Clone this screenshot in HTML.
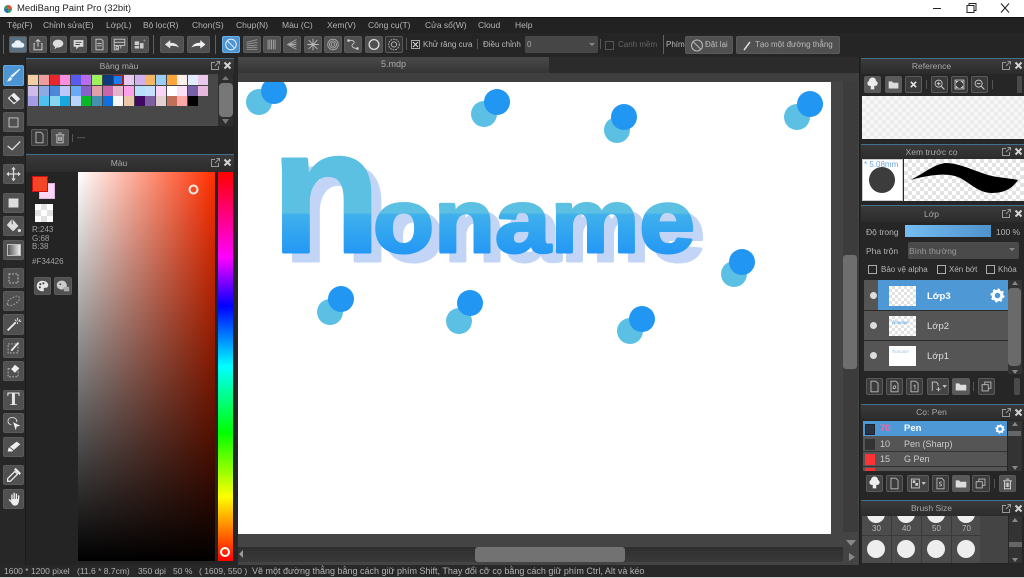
<!DOCTYPE html>
<html><head><meta charset="utf-8"><title>MediBang Paint Pro</title>
<style>
html,body{margin:0;padding:0;width:1024px;height:578px;overflow:hidden;background:#222}
body{position:relative;font-family:"Liberation Sans","Noto Sans CJK SC",sans-serif;font-size:8.500px;color:#b4b4b4}
div,span,svg{position:absolute;box-sizing:border-box}
.t{white-space:nowrap;line-height:12px}
.k{font-size:8px}
.b{background:#505050;border-radius:2px;border:1px solid #5a5a5a}
.b svg{left:0;top:0;width:100%;height:100%}
.h{background:linear-gradient(#3a3a3a,#2c2c2c);border-top:1px solid #41708f;color:#a8a8a8;text-align:center;line-height:15px;font-size:8.500px;padding-right:22px}
.c{background-color:#fff;background-image:conic-gradient(#e2e2e2 25%,#fff 0 50%,#e2e2e2 0 75%,#fff 0);background-size:8px 8px}
.s{width:10px;height:10px}
.wi{width:9px;height:9px;fill:none;stroke:#999}
.x{width:9px;height:9px;fill:none;stroke:#d4d4d4;stroke-width:2}
.cb{width:9px;height:9px;border:1px solid #aaa}
</style></head><body>

<!-- title bar -->
<div style="left:0;top:0;width:1024px;height:17px;background:#fff"></div>
<svg style="left:3px;top:4px;width:10px;height:10px" viewBox="0 0 10 10"><circle cx="5" cy="5" r="4" fill="#3a9a6a"/><path d="M5 1A4 4 0 0 1 9 5L5 5Z" fill="#e8503a"/><path d="M1 5A4 4 0 0 0 5 9L5 5Z" fill="#2b6cc4"/></svg>
<div class="t" style="left:17px;top:3px;color:#222;font-size:9.500px">MediBang Paint Pro (32bit)</div>
<svg style="left:930px;top:0;width:94px;height:17px" viewBox="0 0 94 17" fill="none" stroke="#222"><path d="M3 8.500H11"/><path d="M37 5.500H44V12.500H37ZM39 5.500V3.500H46V10.500H44"/><path d="M71 3.500L79 12.500M79 3.500L71 12.500"/></svg>

<!-- menu -->
<div style="left:0;top:17px;width:1024px;height:16px;background:#222;border-top:1px solid #111"></div>
<div class="t" style="left:7px;top:19px">Tệp(F)</div>
<div class="t" style="left:43px;top:19px">Chỉnh sửa(E)</div>
<div class="t" style="left:106px;top:19px">Lớp(L)</div>
<div class="t" style="left:143px;top:19px">Bộ lọc(R)</div>
<div class="t" style="left:192px;top:19px">Chọn(S)</div>
<div class="t" style="left:236px;top:19px">Chụp(N)</div>
<div class="t" style="left:282px;top:19px">Màu (C)</div>
<div class="t" style="left:327px;top:19px">Xem(V)</div>
<div class="t" style="left:368px;top:19px">Công cụ(T)</div>
<div class="t" style="left:425px;top:19px">Cửa sổ(W)</div>
<div class="t" style="left:478px;top:19px">Cloud</div>
<div class="t" style="left:515px;top:19px">Help</div>

<!-- toolbar -->
<div style="left:0;top:33px;width:1024px;height:24px;background:#252525"></div>
<div style="left:3px;top:35px;width:1px;height:19px;background:#3f6a8a"></div>
<div style="left:153px;top:35px;width:1px;height:19px;background:#3f6a8a"></div>
<div style="left:215px;top:35px;width:1px;height:19px;background:#3f6a8a"></div>
<div style="left:663px;top:35px;width:1px;height:19px;background:#3f6a8a"></div>

<div class="b" style="left:9px;top:36px;width:18px;height:17px;background:#5a6f80"><svg viewBox="0 0 18 17"><path d="M4 12a2.500 2.500 0 0 1 .5-5A4.500 4.500 0 0 1 13 6.500a2.800 2.800 0 0 1 1 5.500Z" fill="#e8f2fa"/></svg></div>
<div class="b" style="left:29px;top:36px;width:18px;height:17px"><svg viewBox="0 0 18 17" fill="none" stroke="#ddd"><path d="M5.500 7.500H4.500V14.500H13.500V7.500H12.500M9 11V3M6.500 5.500L9 3L11.500 5.500"/></svg></div>
<div class="b" style="left:50px;top:36px;width:17px;height:17px"><svg viewBox="0 0 17 17"><ellipse cx="8" cy="7.500" rx="6" ry="4.500" fill="#ddd"/><path d="M5 10L4 14L8 11Z" fill="#ddd"/></svg></div>
<div class="b" style="left:70px;top:36px;width:17px;height:17px"><svg viewBox="0 0 17 17"><path d="M3 3.500H14V11H9L6 14V11H3Z" fill="#ddd"/><path d="M5 6H12M5 8.500H10" stroke="#444"/></svg></div>
<div class="b" style="left:91px;top:36px;width:17px;height:17px"><svg viewBox="0 0 17 17" fill="none" stroke="#ccc"><path d="M4.500 2.500H10.500L12.500 4.500V14.500H4.500ZM6 7.500H11M6 10H11"/></svg></div>
<div class="b" style="left:111px;top:36px;width:17px;height:17px"><svg viewBox="0 0 17 17" fill="none" stroke="#ccc"><path d="M2.500 2.500H14.500V9.500H2.500ZM2.500 6H14.500M2.500 9.500V14.500H8M10 9.500V13"/><circle cx="6" cy="12" r="1.500"/></svg></div>
<div class="b" style="left:131px;top:36px;width:18px;height:17px"><svg viewBox="0 0 18 17"><path d="M3 5H8V9H3ZM9 7H13V13H9ZM3 10H8V13H3Z" fill="#ccc"/><path d="M13 3H15V5H13Z" fill="#888"/></svg></div>

<div class="b" style="left:160px;top:36px;width:24px;height:17px"><svg viewBox="0 0 24 17"><path d="M4 8.500L10 3.500V6.500C15 6.500 18 8 20 12C17 10 14 10 10 10V13Z" fill="#e6e6e6"/></svg></div>
<div class="b" style="left:187px;top:36px;width:23px;height:17px"><svg viewBox="0 0 24 17"><path d="M20 8.500L14 3.500V6.500C9 6.500 6 8 4 12C7 10 10 10 14 10V13Z" fill="#f2f2f2"/></svg></div>

<div class="b" style="left:222px;top:36px;width:18px;height:17px;background:#4d95d2;border-color:#6cb0e6"><svg viewBox="0 0 18 17" fill="none" stroke="#dceaf6" stroke-width="1.200"><circle cx="9" cy="8.500" r="6"/><path d="M5 4.500L13 12.500"/></svg></div>
<div class="b" style="left:243px;top:36px;width:18px;height:17px"><svg viewBox="0 0 18 17" stroke="#999"><path d="M3 6L15 3M3 8L15 6M3 10L15 9M3 12L15 11.500M3 14L15 14"/></svg></div>
<div class="b" style="left:263px;top:36px;width:18px;height:17px"><svg viewBox="0 0 18 17" stroke="#aaa"><path d="M4.500 3V14M6.500 3V14M8.500 3V14M10.500 3V14M12.500 3V14"/></svg></div>
<div class="b" style="left:283px;top:36px;width:18px;height:17px"><svg viewBox="0 0 18 17" stroke="#aaa" fill="none"><path d="M14 3L4 8.500L14 14M14 6L4 8.500L14 11M4 8.500H14"/></svg></div>
<div class="b" style="left:304px;top:36px;width:18px;height:17px"><svg viewBox="0 0 18 17" stroke="#bbb"><path d="M9 2V15M2.500 8.500H15.500M4 3.500L14 13.500M14 3.500L4 13.500"/></svg></div>
<div class="b" style="left:324px;top:36px;width:18px;height:17px"><svg viewBox="0 0 18 17" stroke="#aaa" fill="none"><circle cx="9" cy="8.500" r="6"/><circle cx="9" cy="8.500" r="4"/><circle cx="9" cy="8.500" r="2"/></svg></div>
<div class="b" style="left:344px;top:36px;width:18px;height:17px"><svg viewBox="0 0 18 17" stroke="#ccc" fill="none"><path d="M4 4C10 3 12 6 9 8C6 10 9 13 14 13"/><circle cx="4" cy="4" r="1" fill="#ddd"/><circle cx="14" cy="13" r="1" fill="#ddd"/></svg></div>
<div class="b" style="left:365px;top:36px;width:18px;height:17px"><svg viewBox="0 0 18 17" stroke="#ddd" fill="none" stroke-width="1.500"><circle cx="9" cy="8.500" r="5.500"/></svg></div>
<div class="b" style="left:385px;top:36px;width:18px;height:17px;background:#333"><svg viewBox="0 0 18 17" stroke="#bbb" fill="none"><circle cx="9" cy="8.500" r="6" stroke-dasharray="2 1"/><circle cx="9" cy="8.500" r="3"/></svg></div>

<div style="left:406px;top:38px;width:1px;height:12px;background:#555"></div>
<div class="cb" style="left:411px;top:40px"><svg style="left:0;top:0;width:7px;height:7px" viewBox="0 0 7 7" stroke="#ddd"><path d="M1 1L6 6M6 1L1 6"/></svg></div>
<div class="t k" style="left:423px;top:39px;color:#bbb">Khử răng cưa</div>
<div style="left:477px;top:39px;width:1px;height:10px;background:#555"></div>
<div class="t k" style="left:483px;top:39px;color:#bbb">Điều chỉnh</div>
<div class="b" style="left:525px;top:36px;width:73px;height:17px;background:#464646;border-color:#484848"></div>
<div class="t k" style="left:527px;top:39px;color:#aaa">0</div>
<svg style="left:589px;top:43px;width:6px;height:4px" viewBox="0 0 6 4"><path d="M0 0H6L3 3Z" fill="#888"/></svg>
<div style="left:600px;top:39px;width:1px;height:10px;background:#555"></div>
<div class="cb" style="left:605px;top:41px;border-color:#555"></div>
<div class="t k" style="left:618px;top:39px;color:#666">Cạnh mềm</div>
<div class="t k" style="left:666px;top:39px;color:#bbb">Phím</div>
<div class="b" style="left:685px;top:36px;width:48px;height:18px"><svg viewBox="0 0 48 18" style="width:48px;height:18px" fill="none" stroke="#bbb"><circle cx="11" cy="8.500" r="5.500"/><path d="M7 4.500L15 12.500"/></svg></div>
<div class="t k" style="left:705px;top:39px;color:#bbb">Đặt lại</div>
<div class="b" style="left:736px;top:36px;width:104px;height:18px"><svg viewBox="0 0 104 18" style="width:104px;height:18px"><path d="M7 13L13 5" stroke="#ddd" stroke-width="1.500"/></svg></div>
<div class="t k" style="left:755px;top:39px;color:#bbb">Tạo một đường thẳng</div>

<!-- left tool column -->
<div style="left:0;top:57px;width:26px;height:508px;background:#272727;border-right:1px solid #1c1c1c"></div>
<div class="b" style="left:3px;top:65px;width:21px;height:21px;background:#4d95d2;border-color:#64a8e0"><svg viewBox="0 0 21 21"><path d="M17 3L18 4L9 13L7 11Z" fill="#e8f0f6"/><path d="M7 12L9 14C8 17 5 17 3 17C4.500 16 5 13 7 12Z" fill="#e8f0f6"/></svg></div>
<div class="b" style="left:3px;top:89px;width:21px;height:20px"><svg viewBox="0 0 21 20"><path d="M11 3L18 10L11 16L4 9Z" fill="#eee"/><path d="M8 6.500L14 12.500L11 14L6 9Z" fill="#444"/></svg></div>
<div class="b" style="left:3px;top:112px;width:21px;height:20px"><svg viewBox="0 0 21 20" fill="none" stroke="#ccc"><path d="M5.500 5.500H15.500V15.500H5.500Z"/></svg></div>
<div class="b" style="left:3px;top:136px;width:21px;height:20px"><svg viewBox="0 0 21 20" fill="none" stroke="#ddd" stroke-width="1.500"><path d="M4 10L9 14L18 5"/></svg></div>
<div class="b" style="left:3px;top:164px;width:21px;height:20px"><svg viewBox="0 0 21 20"><path d="M10.500 2L13 5H11.200V9.300H15.500V7.500L18.500 10L15.500 12.500V10.700H11.200V15H13L10.500 18L8 15H9.800V10.700H5.500V12.500L2.500 10L5.500 7.500V9.300H9.800V5H8Z" fill="#ddd"/></svg></div>
<div class="b" style="left:3px;top:193px;width:21px;height:20px"><svg viewBox="0 0 21 20"><path d="M5 5H16V15H5Z" fill="#ddd"/></svg></div>
<div class="b" style="left:3px;top:216px;width:21px;height:20px"><svg viewBox="0 0 21 20"><path d="M9 2L16 10L10 16L3 9Z" fill="#ddd"/><path d="M9 2V8" stroke="#444"/><circle cx="17" cy="15" r="1.800" fill="#ddd"/></svg></div>
<div class="b" style="left:3px;top:240px;width:21px;height:20px"><div style="left:3px;top:3px;width:14px;height:12px;background:linear-gradient(90deg,#555,#eee);border:1px solid #bbb"></div></div>
<div class="b" style="left:3px;top:268px;width:21px;height:20px"><svg viewBox="0 0 21 20" fill="none" stroke="#ccc" stroke-dasharray="2 1.500"><path d="M5.500 5.500H15.500V15.500H5.500Z"/></svg></div>
<div class="b" style="left:3px;top:291px;width:21px;height:20px"><svg viewBox="0 0 21 20" fill="none" stroke="#aaa" stroke-dasharray="2 1.500"><path d="M4 14C2 9 9 7 12 5C16 3 19 7 16 10C13 13 7 17 4 14Z"/></svg></div>
<div class="b" style="left:3px;top:314px;width:21px;height:21px"><svg viewBox="0 0 21 21"><path d="M4 17L13 8" stroke="#eee" stroke-width="2"/><path d="M15 3V6M12 5L14 7M18 5L16 7M15 8V10M17 7H19" stroke="#eee"/></svg></div>
<div class="b" style="left:3px;top:338px;width:21px;height:20px"><svg viewBox="0 0 21 20" fill="none"><path d="M4.500 5.500H15.500V15.500H4.500Z" stroke="#bbb" stroke-dasharray="2 1.500"/><path d="M8 13L16 4" stroke="#eee" stroke-width="2"/></svg></div>
<div class="b" style="left:3px;top:361px;width:21px;height:20px"><svg viewBox="0 0 21 20" fill="none"><path d="M4.500 7.500H15.500V16.500H4.500Z" stroke="#bbb" stroke-dasharray="2 1.500"/><path d="M12 3L17 7L12 12L8 8Z" fill="#eee"/></svg></div>
<div class="b" style="left:3px;top:390px;width:21px;height:20px"><div class="t" style="left:2px;top:-1px;width:15px;text-align:center;font:bold 19px/20px 'Liberation Serif',serif;color:#e6e6e6">T</div></div>
<div class="b" style="left:3px;top:413px;width:21px;height:20px"><svg viewBox="0 0 21 20"><path d="M8 12C3 11 3 4 9 4C13 4 15 7 14 9" fill="none" stroke="#ddd"/><path d="M10 9L18 13L14 14L13 18Z" fill="#eee"/></svg></div>
<div class="b" style="left:3px;top:437px;width:21px;height:20px"><svg viewBox="0 0 21 20"><path d="M14 4L18 7L9 15H4L5 11Z" fill="#eee"/><path d="M6 10L11 14" stroke="#555"/></svg></div>
<div class="b" style="left:3px;top:465px;width:21px;height:20px"><svg viewBox="0 0 21 20" fill="none" stroke="#eee" stroke-width="1.400"><path d="M12 6L15 9L7 17L4 17L4 14Z"/><path d="M12 3L18 9" stroke-width="2.500"/></svg></div>
<div class="b" style="left:3px;top:489px;width:21px;height:20px"><svg viewBox="0 0 21 20"><path d="M5 11L8 14C9 17 12 18 14 17C16 16 17 13 17 6H15.500V10H14.500V4H13V10H12V3H10.500V10H9.500V5H8V12L6 10Z" fill="#eee"/></svg></div>

<!-- palette panel -->
<div style="left:26px;top:57px;width:208px;height:508px;background:#242424"></div>
<div class="h" style="left:26px;top:58px;width:208px;height:16px">Bảng màu</div>
<svg class="wi" style="left:211px;top:61px" viewBox="0 0 9 9"><path d="M4 1.500H.5V8.500H7.500V5M4 5L8 1M5.500 .5H8.500V3.500"/></svg><svg class="x" style="left:223px;top:61px" viewBox="0 0 9 9"><path d="M1.500 1.500L7.500 7.500M7.500 1.500L1.500 7.500"/></svg>
<div style="left:27px;top:74px;width:191px;height:52px;background:#484848"></div>
<div class="s" style="left:28px;top:75px;background:#f3cfa6"></div><div class="s" style="left:39px;top:75px;background:#ee9c9c"></div><div class="s" style="left:50px;top:75px;background:#e8262e"></div><div class="s" style="left:60px;top:75px;background:#fb8fdf"></div><div class="s" style="left:71px;top:75px;background:#5a5af0"></div><div class="s" style="left:81px;top:75px;background:#b96cf0"></div><div class="s" style="left:92px;top:75px;background:#9cf25c"></div><div class="s" style="left:103px;top:75px;background:#0b3b7a"></div><div class="s" style="left:113px;top:75px;background:#1b7cf0;border:1px solid #a02020"></div><div class="s" style="left:124px;top:75px;background:#e6c9f0"></div><div class="s" style="left:135px;top:75px;background:#d2b0ec"></div><div class="s" style="left:145px;top:75px;background:#f3b765"></div><div class="s" style="left:156px;top:75px;background:#9acdfa"></div><div class="s" style="left:167px;top:75px;background:#fba63c"></div><div class="s" style="left:177px;top:75px;background:#fff0ee"></div><div class="s" style="left:188px;top:75px;background:#e3ecff"></div><div class="s" style="left:198px;top:75px;background:#ecc9ec"></div>
<div class="s" style="left:28px;top:86px;background:#cdbcec"></div><div class="s" style="left:39px;top:86px;background:#8eaae6"></div><div class="s" style="left:50px;top:86px;background:#4d88d8"></div><div class="s" style="left:60px;top:86px;background:#bcc8f8"></div><div class="s" style="left:71px;top:86px;background:#6aa8f8"></div><div class="s" style="left:81px;top:86px;background:#8760c8"></div><div class="s" style="left:92px;top:86px;background:#e0a0a8"></div><div class="s" style="left:103px;top:86px;background:#c666ac"></div><div class="s" style="left:113px;top:86px;background:#e4b4cc"></div><div class="s" style="left:124px;top:86px;background:#fca0ec"></div><div class="s" style="left:135px;top:86px;background:#b8e0fc"></div><div class="s" style="left:145px;top:86px;background:#c4e0fc"></div><div class="s" style="left:156px;top:86px;background:#fcd4f8"></div><div class="s" style="left:167px;top:86px;background:#fff"></div><div class="s" style="left:177px;top:86px;background:#fce0f8"></div><div class="s" style="left:188px;top:86px;background:#7860a8"></div><div class="s" style="left:198px;top:86px;background:#e8b8dc"></div>
<div class="s" style="left:28px;top:96px;background:#a49ce4"></div><div class="s" style="left:39px;top:96px;background:#50c0f0"></div><div class="s" style="left:50px;top:96px;background:#88d4f0"></div><div class="s" style="left:60px;top:96px;background:#18a8e0"></div><div class="s" style="left:71px;top:96px;background:#b8d4fc"></div><div class="s" style="left:81px;top:96px;background:#08b828"></div><div class="s" style="left:92px;top:96px;background:#4890b0"></div><div class="s" style="left:103px;top:96px;background:#1070e0"></div><div class="s" style="left:113px;top:96px;background:#f8f8f8"></div><div class="s" style="left:124px;top:96px;background:#e8c8a8"></div><div class="s" style="left:135px;top:96px;background:#400860"></div><div class="s" style="left:145px;top:96px;background:#7c60a0"></div><div class="s" style="left:156px;top:96px;background:#e4d0d0"></div><div class="s" style="left:167px;top:96px;background:#c07058"></div><div class="s" style="left:177px;top:96px;background:#fca8a8"></div><div class="s" style="left:188px;top:96px;background:#000"></div>
<div style="left:218px;top:74px;width:15px;height:52px;background:#2e2e2e"></div>
<div style="left:219px;top:83px;width:14px;height:34px;background:#777;border-radius:4px"></div>
<svg style="left:221px;top:76px;width:9px;height:48px" viewBox="0 0 9 48"><path d="M4.500 0L8 4H1ZM4.500 48L8 43H1Z" fill="#777"/></svg>
<div class="b" style="left:31px;top:129px;width:17px;height:17px;background:#3c3c3c"><svg viewBox="0 0 17 17" fill="none" stroke="#bbb"><path d="M4.500 2.500H10L12.500 5V14.500H4.500Z"/></svg></div>
<div class="b" style="left:51px;top:129px;width:18px;height:17px"><svg viewBox="0 0 18 17" fill="none" stroke="#ccc"><path d="M4 5.500H14M5.500 5.500V14.500H12.500V5.500M7 3.500H11M7.500 7.500V12.500M9 7.500V12.500M10.500 7.500V12.500"/></svg></div>
<div style="left:72px;top:134px;width:1px;height:8px;background:#555"></div>
<div class="t" style="left:77px;top:131px;color:#888">---</div>

<!-- colour panel -->
<div class="h" style="left:26px;top:154px;width:208px;height:18px;line-height:17px">Màu</div>
<svg class="wi" style="left:211px;top:158px" viewBox="0 0 9 9"><path d="M4 1.500H.5V8.500H7.500V5M4 5L8 1M5.500 .5H8.500V3.500"/></svg><svg class="x" style="left:223px;top:158px" viewBox="0 0 9 9"><path d="M1.500 1.500L7.500 7.500M7.500 1.500L1.500 7.500"/></svg>
<div style="left:39px;top:183px;width:16px;height:16px;background:#f9d6f8;border:1px solid #e0b0e0"></div>
<div style="left:32px;top:176px;width:16px;height:16px;background:#f34426;border:1px solid #d01010"></div>
<div class="c" style="left:35px;top:204px;width:18px;height:18px;background-size:12px 12px"></div>
<div class="t" style="left:32px;top:226px;color:#a0a0a0;font-size:8px;line-height:8.500px">R:243<br>G:68<br>B:38</div>
<div class="t" style="left:32px;top:256px;color:#a0a0a0;font-size:8px">#F34426</div>
<div class="b" style="left:34px;top:277px;width:17px;height:18px"><svg viewBox="0 0 17 18"><path d="M8.500 3C4 3 2 6 2 9C2 13 5 15 9 15C10 15 10.500 14 10 13C9.500 11.500 10.500 11 12 11C14 11 15 10 15 8C15 5 12 3 8.500 3Z" fill="#e6e6e6"/><circle cx="6" cy="7" r="1.200" fill="#444"/><circle cx="9.500" cy="6" r="1.200" fill="#444"/><circle cx="5.500" cy="10.500" r="1.200" fill="#444"/></svg></div>
<div class="b" style="left:54px;top:277px;width:18px;height:18px"><svg viewBox="0 0 18 18"><path d="M8 3C4 3 2 5.500 2 8C2 11 5 13 8 13C10 13 10 11 11 10.500H13C14 9.500 13 3 8 3Z" fill="#ccc"/><path d="M10 10H16V15H10Z" fill="#aaa"/><circle cx="6" cy="7" r="1" fill="#444"/></svg></div>
<div style="left:78px;top:172px;width:137px;height:389px;background:linear-gradient(to bottom,rgba(0,0,0,0),#000),linear-gradient(to right,#fff,#ff2f00)"></div>
<svg style="left:188px;top:184px;width:12px;height:12px" viewBox="0 0 12 12"><circle cx="5.500" cy="5.500" r="4" fill="none" stroke="#f4e8e4" stroke-width="2"/></svg>
<div style="left:218px;top:172px;width:15px;height:389px;background:linear-gradient(to bottom,#f00,#f0f 22%,#00f 34.500%,#0ff 50%,#0f0 67%,#ff0 83.500%,#f00 100%)"></div>
<svg style="left:219px;top:546px;width:12px;height:12px" viewBox="0 0 12 12"><circle cx="6" cy="6" r="4" fill="none" stroke="#fff" stroke-width="2"/></svg>

<!-- canvas area -->
<div style="left:234px;top:57px;width:627px;height:508px;background:#444"></div>
<div style="left:234px;top:57px;width:4px;height:508px;background:#262626"></div>
<div style="left:238px;top:57px;width:311px;height:16px;background:linear-gradient(#4a4a4a,#343434);border-radius:2px;color:#aaa;text-align:center;line-height:15px;font-size:9px">5.mdp</div>
<div style="left:549px;top:57px;width:312px;height:16px;background:#2b2b2b"></div>
<div style="left:238px;top:73px;width:623px;height:9px;background:#3f3f3f"></div>
<div style="left:238px;top:82px;width:593px;height:452px;background:#fff;overflow:hidden">
<svg style="left:0;top:0;width:593px;height:452px" viewBox="238 82 593 452">
<defs><linearGradient id="g" gradientUnits="userSpaceOnUse" x1="0" y1="150" x2="0" y2="258"><stop offset="0" stop-color="#5cc0e3"/><stop offset=".58" stop-color="#5cc0e3"/><stop offset=".6" stop-color="#3fb0ec"/><stop offset="1" stop-color="#2095f6"/></linearGradient></defs>
<circle cx="259" cy="102" r="13" fill="#5bc0e4"/><circle cx="274" cy="91" r="13" fill="#2196f3"/>
<circle cx="484" cy="114" r="13" fill="#5bc0e4"/><circle cx="497" cy="102" r="13" fill="#2196f3"/>
<circle cx="617" cy="130" r="13" fill="#5bc0e4"/><circle cx="624" cy="117" r="13" fill="#2196f3"/>
<circle cx="797" cy="117" r="13" fill="#5bc0e4"/><circle cx="810" cy="104" r="13" fill="#2196f3"/>
<circle cx="734" cy="274" r="13" fill="#5bc0e4"/><circle cx="742" cy="262" r="13" fill="#2196f3"/>
<circle cx="330" cy="312" r="13" fill="#5bc0e4"/><circle cx="341" cy="299" r="13" fill="#2196f3"/>
<circle cx="459" cy="321" r="13" fill="#5bc0e4"/><circle cx="470" cy="303" r="13" fill="#2196f3"/>
<circle cx="630" cy="331" r="13" fill="#5bc0e4"/><circle cx="642" cy="319" r="13" fill="#2196f3"/>
<g font-family="Liberation Sans" font-weight="bold" stroke-linejoin="round">
<g fill="#c2d5f6" stroke="#c2d5f6" stroke-width="3">
<text x="281" y="261" font-size="176" textLength="110" lengthAdjust="spacingAndGlyphs">n</text>
<text x="383" y="261" font-size="90" textLength="322" lengthAdjust="spacingAndGlyphs">oname</text>
</g>
<g fill="url(#g)" stroke="url(#g)" stroke-width="3">
<text x="271" y="252" font-size="176" textLength="110" lengthAdjust="spacingAndGlyphs">n</text>
<text x="373" y="252" font-size="90" textLength="322" lengthAdjust="spacingAndGlyphs">oname</text>
</g>
</g>
</svg></div>
<!-- scrollbars -->
<div style="left:843px;top:82px;width:15px;height:450px;background:#3c3c3c"></div>
<div style="left:843px;top:255px;width:14px;height:114px;background:#6e6e6e;border-radius:3px"></div>
<div style="left:238px;top:547px;width:605px;height:15px;background:linear-gradient(#2e2e2e,#3a3a3a)"></div>
<div style="left:475px;top:547px;width:150px;height:15px;background:#727272;border-radius:3px"></div>
<svg style="left:238px;top:549px;width:6px;height:10px" viewBox="0 0 6 10"><path d="M5 1V9L1 5Z" fill="#999"/></svg>
<svg style="left:843px;top:538px;width:16px;height:24px" viewBox="0 0 16 24"><path d="M3 2H13L8 8Z" fill="#888"/><path d="M6 15V23L12 19Z" fill="#888"/></svg>

<!-- right column -->
<div style="left:859px;top:57px;width:165px;height:508px;background:#262626;border-left:1px solid #1c1c1c"></div>
<div class="h" style="left:861px;top:58px;width:163px;height:16px">Reference</div>
<svg class="wi" style="left:1002px;top:61px" viewBox="0 0 9 9"><path d="M4 1.500H.5V8.500H7.500V5M4 5L8 1M5.500 .5H8.500V3.500"/></svg><svg class="x" style="left:1014px;top:61px" viewBox="0 0 9 9"><path d="M1.500 1.500L7.500 7.500M7.500 1.500L1.500 7.500"/></svg>
<div class="b" style="left:864px;top:76px;width:17px;height:17px;background:#5a5a5a"><svg viewBox="0 0 17 17"><path d="M4.500 10a3 3 0 0 1 0-5.500a4 4 0 0 1 8 0a3 3 0 0 1 0 5.500H10.500V14H6.500V10Z" fill="#eee"/></svg></div>
<div class="b" style="left:885px;top:76px;width:17px;height:17px;background:#5a5a5a"><svg viewBox="0 0 17 17"><path d="M3 5H7L8 6.500H14V13H3Z" fill="#ddd"/></svg></div>
<div class="b" style="left:905px;top:76px;width:17px;height:17px;background:#3a3a3a"><svg viewBox="0 0 17 17" stroke="#e6e6e6" stroke-width="1.800"><path d="M5.500 5.500L11.500 11.500M11.500 5.500L5.500 11.500"/></svg></div>
<div style="left:926px;top:80px;width:1px;height:9px;background:#555"></div>
<div class="b" style="left:931px;top:76px;width:17px;height:17px;background:#3a3a3a"><svg viewBox="0 0 17 17" fill="none" stroke="#ccc"><circle cx="7.500" cy="7.500" r="4"/><path d="M10.500 10.500L14 14M5.500 7.500H9.500M7.500 5.500V9.500" stroke-width="1.200"/></svg></div>
<div class="b" style="left:951px;top:76px;width:17px;height:17px;background:#3a3a3a"><svg viewBox="0 0 17 17" fill="none" stroke="#ccc"><path d="M3.500 3.500H13.500V13.500H3.500ZM5 7V5H7M10 5H12V7M12 10V12H10M7 12H5V10"/></svg></div>
<div class="b" style="left:971px;top:76px;width:17px;height:17px;background:#3a3a3a"><svg viewBox="0 0 17 17" fill="none" stroke="#ccc"><circle cx="7.500" cy="7.500" r="4"/><path d="M10.500 10.500L14 14M5.500 7.500H9.500" stroke-width="1.200"/></svg></div>
<div style="left:992px;top:80px;width:1px;height:9px;background:#555"></div>
<div style="left:1017px;top:76px;width:5px;height:17px;background:#4a4a4a"></div>
<div class="c" style="left:862px;top:96px;width:162px;height:43px;background-image:conic-gradient(#ececec 25%,#f6f6f6 0 50%,#ececec 0 75%,#f6f6f6 0)"></div>

<div class="h" style="left:861px;top:144px;width:163px;height:15px;line-height:14px">Xem trước cọ</div>
<svg class="wi" style="left:1002px;top:147px" viewBox="0 0 9 9"><path d="M4 1.500H.5V8.500H7.500V5M4 5L8 1M5.500 .5H8.500V3.500"/></svg><svg class="x" style="left:1014px;top:147px" viewBox="0 0 9 9"><path d="M1.500 1.500L7.500 7.500M7.500 1.500L1.500 7.500"/></svg>
<div class="c" style="left:904px;top:159px;width:120px;height:42px"></div>
<svg style="left:904px;top:159px;width:120px;height:42px" viewBox="0 0 120 42"><path d="M6 21C18 16 28 6 41 4C55 4 68 11 84 16C95 19 105 19 114 21C108 30 100 34 88 34C76 34 68 26 58 20C48 14 32 14 6 21Z" fill="#000"/></svg>
<div style="left:862px;top:159px;width:41px;height:42px;background:#fff;border:1px solid #ccc"></div>
<div style="left:869px;top:167px;width:26px;height:26px;border-radius:50%;background:#3c3c3c"></div>
<div class="t k" style="left:864px;top:159px;color:#6fa8dc">* 5.08mm</div>

<div class="h" style="left:861px;top:205px;width:163px;height:17px;line-height:16px">Lớp</div>
<svg class="wi" style="left:1002px;top:209px" viewBox="0 0 9 9"><path d="M4 1.500H.5V8.500H7.500V5M4 5L8 1M5.500 .5H8.500V3.500"/></svg><svg class="x" style="left:1014px;top:209px" viewBox="0 0 9 9"><path d="M1.500 1.500L7.500 7.500M7.500 1.500L1.500 7.500"/></svg>
<div class="t" style="left:866px;top:226px">Độ trong</div>
<div style="left:905px;top:225px;width:86px;height:12px;background:linear-gradient(90deg,#75bdf2,#4f92cc)"></div>
<div class="t" style="left:996px;top:226px">100 %</div>
<div class="t" style="left:866px;top:245px">Pha trộn</div>
<div style="left:908px;top:242px;width:111px;height:17px;background:#4a4a4a;border-radius:2px"></div>
<div class="t" style="left:909px;top:245px;color:#999">Bình thường</div>
<svg style="left:1009px;top:248px;width:6px;height:4px" viewBox="0 0 6 4"><path d="M0 0H6L3 3Z" fill="#888"/></svg>
<div class="cb" style="left:868px;top:265px"></div><div class="t k" style="left:881px;top:264px">Bảo vệ alpha</div>
<div class="cb" style="left:937px;top:265px"></div><div class="t k" style="left:949px;top:264px">Xén bớt</div>
<div class="cb" style="left:986px;top:265px"></div><div class="t k" style="left:998px;top:264px">Khóa</div>

<div style="left:864px;top:280px;width:144px;height:91px;background:#555"></div>
<div style="left:878px;top:280px;width:130px;height:30px;background:#4f98d6"></div>
<div style="left:864px;top:310px;width:144px;height:1px;background:#2a2a2a"></div>
<div style="left:864px;top:340px;width:144px;height:1px;background:#2a2a2a"></div>
<div style="left:870px;top:292px;width:7px;height:7px;border-radius:50%;background:#ddd"></div>
<div style="left:870px;top:322px;width:7px;height:7px;border-radius:50%;background:#ddd"></div>
<div style="left:870px;top:352px;width:7px;height:7px;border-radius:50%;background:#ddd"></div>
<div class="c" style="left:889px;top:286px;width:27px;height:20px;background-size:6px 6px"></div>
<div class="c" style="left:889px;top:316px;width:27px;height:20px;background-size:6px 6px"><div class="t" style="left:3px;top:4px;font:italic 5px/8px 'Liberation Serif',serif;color:#3f9fe8">Noname</div></div>
<div style="left:889px;top:346px;width:27px;height:20px;background:#fff"><div class="t" style="left:3px;top:3px;font:italic 5px/8px 'Liberation Serif',serif;color:#9fbfe8">Noname</div></div>
<div class="t" style="left:927px;top:291px;color:#fff;font-weight:bold;font-size:9.500px">Lớp3</div>
<div class="t" style="left:927px;top:321px;color:#ddd;font-size:9.500px">Lớp2</div>
<div class="t" style="left:927px;top:351px;color:#ddd;font-size:9.500px">Lớp1</div>
<svg style="left:990px;top:288px;width:15px;height:15px" viewBox="0 0 15 15"><circle cx="7.500" cy="7.500" r="4.300" fill="none" stroke="#fff" stroke-width="3"/><circle cx="7.500" cy="7.500" r="6" fill="none" stroke="#fff" stroke-width="2" stroke-dasharray="2.200 2.500"/></svg>
<div style="left:1008px;top:280px;width:14px;height:94px;background:#333"></div>
<div style="left:1008px;top:288px;width:13px;height:78px;background:#6a6a6a;border-radius:4px"></div>
<svg style="left:1011px;top:281px;width:8px;height:93px" viewBox="0 0 8 93"><path d="M4 0L7 4H1ZM4 93L7 89H1Z" fill="#888"/></svg>

<div class="b" style="left:866px;top:378px;width:17px;height:17px;background:#3c3c3c"><svg viewBox="0 0 17 17" fill="none" stroke="#bbb"><path d="M4.500 2.500H10L12.500 5V14.500H4.500Z"/></svg></div>
<div class="b" style="left:886px;top:378px;width:17px;height:17px;background:#3c3c3c"><svg viewBox="0 0 17 17" fill="none" stroke="#bbb"><path d="M4.500 2.500H10L12.500 5V14.500H4.500ZM7 11C7 7 10 7 10 9C10 11 8 11 7 11Z"/></svg></div>
<div class="b" style="left:906px;top:378px;width:17px;height:17px;background:#3c3c3c"><svg viewBox="0 0 17 17" fill="none" stroke="#bbb"><path d="M4.500 2.500H10L12.500 5V14.500H4.500ZM7.500 8L9 7V12"/></svg></div>
<div class="b" style="left:927px;top:378px;width:22px;height:17px;background:#444"><svg viewBox="0 0 22 17" fill="none" stroke="#ccc"><path d="M4.500 13.500V3.500H9L11 5.500V8M9 11.500H14M11.500 9V14"/><path d="M16 7H21L18.500 10Z" fill="#ccc" stroke="none"/></svg></div>
<div class="b" style="left:952px;top:378px;width:18px;height:17px;background:#5a5a5a"><svg viewBox="0 0 18 17"><path d="M3 5H7L8 6.500H15V13H3Z" fill="#ddd"/></svg></div>
<div style="left:973px;top:382px;width:1px;height:9px;background:#555"></div>
<div class="b" style="left:978px;top:378px;width:17px;height:17px;background:#3c3c3c"><svg viewBox="0 0 17 17" fill="none" stroke="#bbb"><path d="M3.500 6.500H10.500V13.500H3.500ZM6.500 6.500V3.500H13.500V10.500H10.500"/></svg></div>
<div style="left:1014px;top:378px;width:6px;height:17px;background:#4a4a4a;border-radius:2px"></div>

<div class="h" style="left:861px;top:404px;width:163px;height:16px">Cọ: Pen</div>
<svg class="wi" style="left:1002px;top:408px" viewBox="0 0 9 9"><path d="M4 1.500H.5V8.500H7.500V5M4 5L8 1M5.500 .5H8.500V3.500"/></svg><svg class="x" style="left:1014px;top:408px" viewBox="0 0 9 9"><path d="M1.500 1.500L7.500 7.500M7.500 1.500L1.500 7.500"/></svg>
<div style="left:863px;top:421px;width:144px;height:50px;background:#555;overflow:hidden">
<div style="left:0;top:0;width:144px;height:15px;background:#4f98d6"></div>
<div style="left:0;top:30px;width:144px;height:1px;background:#333"></div>
<div style="left:0;top:45px;width:144px;height:1px;background:#333"></div>
<div style="left:2px;top:3px;width:10px;height:11px;background:#2a3340;border:1px solid #223"></div>
<div style="left:2px;top:18px;width:10px;height:11px;background:#333"></div>
<div style="left:2px;top:33px;width:10px;height:11px;background:#f33"></div>
<div style="left:2px;top:47px;width:10px;height:11px;background:#e33"></div>
<div class="t" style="left:17px;top:2px;color:#ee6aa0;font-weight:bold;font-size:9.500px">70</div>
<div class="t" style="left:41px;top:2px;color:#fff;font-weight:bold;font-size:9.500px">Pen</div>
<div class="t" style="left:17px;top:17px;color:#ccc;font-size:9px">10</div>
<div class="t" style="left:41px;top:17px;color:#ccc;font-size:9px">Pen (Sharp)</div>
<div class="t" style="left:17px;top:32px;color:#ccc;font-size:9px">15</div>
<div class="t" style="left:41px;top:32px;color:#ccc;font-size:9px">G Pen</div>
<svg style="left:132px;top:3px;width:10px;height:10px" viewBox="0 0 15 15"><circle cx="7.500" cy="7.500" r="4.300" fill="none" stroke="#fff" stroke-width="3"/><circle cx="7.500" cy="7.500" r="6" fill="none" stroke="#fff" stroke-width="2" stroke-dasharray="2.200 2.500"/></svg>
</div>
<div style="left:1008px;top:421px;width:14px;height:50px;background:#333"></div>
<div style="left:1008px;top:431px;width:13px;height:5px;background:#666"></div>
<svg style="left:1011px;top:422px;width:8px;height:48px" viewBox="0 0 8 48"><path d="M4 0L7 4H1ZM4 48L7 44H1Z" fill="#888"/></svg>
<div class="b" style="left:866px;top:475px;width:17px;height:17px;background:#444"><svg viewBox="0 0 17 17"><path d="M4.500 10a3 3 0 0 1 0-5.500a4 4 0 0 1 8 0a3 3 0 0 1 0 5.500H10.500V14H6.500V10Z" fill="#eee"/></svg></div>
<div class="b" style="left:886px;top:475px;width:17px;height:17px;background:#3c3c3c"><svg viewBox="0 0 17 17" fill="none" stroke="#bbb"><path d="M4.500 2.500H10L12.500 5V14.500H4.500Z"/></svg></div>
<div class="b" style="left:907px;top:475px;width:22px;height:17px;background:#444"><svg viewBox="0 0 22 17"><path d="M3.500 3.500H12.500V13.500H3.500Z" fill="none" stroke="#ccc"/><path d="M5 5H8V8H5ZM8 8H11V11H8Z" fill="#ccc"/><path d="M15 7H20L17.500 10Z" fill="#ccc"/></svg></div>
<div class="b" style="left:932px;top:475px;width:17px;height:17px;background:#3c3c3c"><svg viewBox="0 0 17 17" fill="none" stroke="#bbb"><path d="M4.500 2.500H10L12.500 5V14.500H4.500ZM10 7C7 6 6.500 8.500 8.500 9C10.500 9.500 10 12 7 11"/></svg></div>
<div class="b" style="left:952px;top:475px;width:18px;height:17px;background:#5a5a5a"><svg viewBox="0 0 18 17"><path d="M3 5H7L8 6.500H15V13H3Z" fill="#ddd"/></svg></div>
<div class="b" style="left:972px;top:475px;width:18px;height:17px;background:#3c3c3c"><svg viewBox="0 0 18 17" fill="none" stroke="#bbb"><path d="M3.500 6.500H10.500V13.500H3.500ZM6.500 6.500V3.500H13.500V10.500H10.500"/></svg></div>
<div style="left:994px;top:479px;width:1px;height:9px;background:#555"></div>
<div class="b" style="left:999px;top:475px;width:17px;height:17px"><svg viewBox="0 0 17 17" fill="none" stroke="#ddd"><path d="M3.500 5.500H13.500M5 5.500V14.500H12V5.500M6.500 3.500H10.500M7 7.500V12.500M8.500 7.500V12.500M10 7.500V12.500"/></svg></div>

<div class="h" style="left:861px;top:500px;width:163px;height:16px">Brush Size</div>
<svg class="wi" style="left:1002px;top:504px" viewBox="0 0 9 9"><path d="M4 1.500H.5V8.500H7.500V5M4 5L8 1M5.500 .5H8.500V3.500"/></svg><svg class="x" style="left:1014px;top:504px" viewBox="0 0 9 9"><path d="M1.500 1.500L7.500 7.500M7.500 1.500L1.500 7.500"/></svg>
<div style="left:862px;top:516px;width:118px;height:47px;background:#4c4c4c;overflow:hidden">
<div style="left:29px;top:0;width:1px;height:47px;background:#3a3a3a"></div>
<div style="left:59px;top:0;width:1px;height:47px;background:#3a3a3a"></div>
<div style="left:89px;top:0;width:1px;height:47px;background:#3a3a3a"></div>
<div style="left:118px;top:0;width:1px;height:47px;background:#3a3a3a"></div>
<div style="left:0;top:19px;width:118px;height:1px;background:#3a3a3a"></div>
<div style="left:5px;top:-11px;width:18px;height:18px;border-radius:50%;background:#eee"></div>
<div style="left:35px;top:-11px;width:18px;height:18px;border-radius:50%;background:#eee"></div>
<div style="left:65px;top:-11px;width:18px;height:18px;border-radius:50%;background:#eee"></div>
<div style="left:95px;top:-11px;width:18px;height:18px;border-radius:50%;background:#eee"></div>
<div class="t" style="left:10px;top:7px;font-size:8px;color:#bbb">30</div>
<div class="t" style="left:40px;top:7px;font-size:8px;color:#bbb">40</div>
<div class="t" style="left:70px;top:7px;font-size:8px;color:#bbb">50</div>
<div class="t" style="left:100px;top:7px;font-size:8px;color:#bbb">70</div>
<div style="left:5px;top:24px;width:18px;height:18px;border-radius:50%;background:#eee"></div>
<div style="left:35px;top:24px;width:18px;height:18px;border-radius:50%;background:#eee"></div>
<div style="left:65px;top:24px;width:18px;height:18px;border-radius:50%;background:#eee"></div>
<div style="left:95px;top:24px;width:18px;height:18px;border-radius:50%;background:#eee"></div>
</div>
<div style="left:980px;top:516px;width:28px;height:47px;background:#444"></div>
<div style="left:1009px;top:516px;width:13px;height:47px;background:#333"></div>
<div style="left:1009px;top:542px;width:13px;height:5px;background:#666"></div>
<svg style="left:1011px;top:518px;width:8px;height:44px" viewBox="0 0 8 44"><path d="M4 0L7 4H1ZM4 44L7 40H1Z" fill="#888"/></svg>

<!-- status -->
<div style="left:0;top:565px;width:1024px;height:13px;background:#282828;border-bottom:1px solid #cfcfcf"></div>
<div class="t" style="left:4px;top:565px">1600 * 1200 pixel</div>
<div class="t" style="left:77px;top:565px">(11.6 * 8.7cm)</div>
<div class="t" style="left:138px;top:565px">350 dpi</div>
<div class="t" style="left:173px;top:565px">50 %</div>
<div class="t" style="left:199px;top:565px">( 1609, 550 )</div>
<div class="t" style="left:252px;top:565px;font-size:9px">Vẽ một đường thẳng bằng cách giữ phím Shift, Thay đổi cỡ cọ bằng cách giữ phím Ctrl, Alt và kéo</div>
</body></html>
